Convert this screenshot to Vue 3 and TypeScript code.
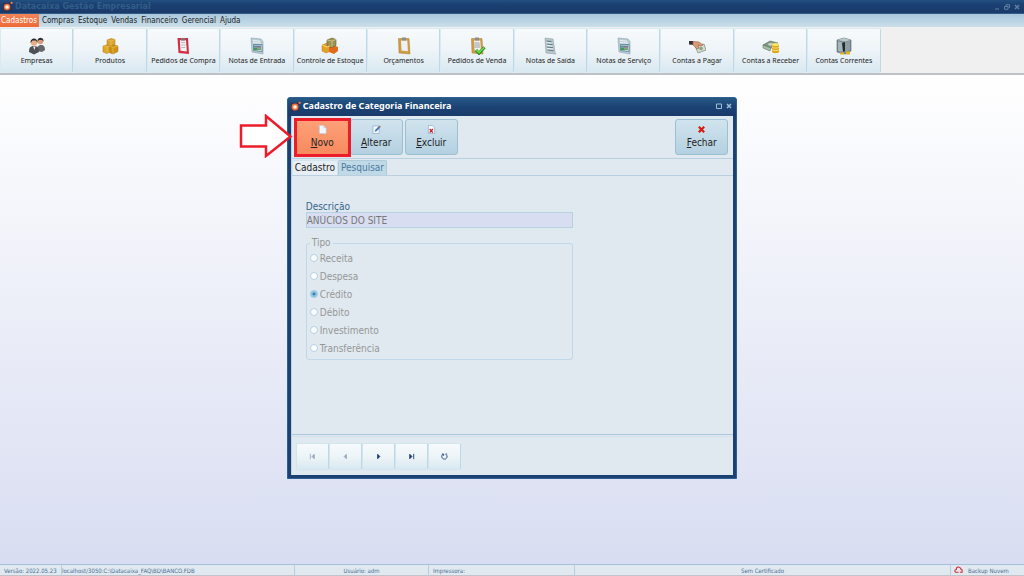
<script setup lang="ts">
import { ref } from 'vue'

interface Tool {
  label: string
  icon: string
}

const menus: string[] = ['Cadastros', 'Compras', 'Estoque', 'Vendas', 'Financeiro', 'Gerencial', 'Ajuda']

const tools: Tool[] = [
  { label: 'Empresas', icon: 'people' },
  { label: 'Produtos', icon: 'boxes' },
  { label: 'Pedidos de Compra', icon: 'redclip' },
  { label: 'Notas de Entrada', icon: 'invoice' },
  { label: 'Controle de Estoque', icon: 'stock' },
  { label: 'Orçamentos', icon: 'clip' },
  { label: 'Pedidos de Venda', icon: 'clipcheck' },
  { label: 'Notas de Saída', icon: 'sheet' },
  { label: 'Notas de Serviço', icon: 'invoice' },
  { label: 'Contas a Pagar', icon: 'pay' },
  { label: 'Contas a Receber', icon: 'money' },
  { label: 'Contas Correntes', icon: 'safe' },
]

const types: string[] = ['Receita', 'Despesa', 'Crédito', 'Débito', 'Investimento', 'Transferência']
const selected = ref('Crédito')
const description = ref('ANÚCIOS DO SITE')
</script>

<template>
  <div class="app">
    <header class="titlebar">
      <svg class="logo" viewBox="0 0 12 12" aria-hidden="true">
        <rect x="1" y="2" width="9" height="9" fill="#3a2f4c" />
        <circle cx="5.500" cy="6.500" r="3.500" fill="#e9743f" />
        <circle cx="5.500" cy="6.500" r="2" fill="#fff3e6" />
        <circle cx="10.500" cy="2" r="1.300" fill="#e9743f" />
      </svg>
      <h1>Datacaixa Gestão Empresarial</h1>
      <div class="winbuttons">
        <button type="button" aria-label="Minimizar"><svg viewBox="0 0 6 6"><path d="M1 5h4" /></svg></button>
        <button type="button" aria-label="Restaurar"><svg viewBox="0 0 6 6"><path d="M2 2V.7h3.500V3.500H4.500M.5 2.500h3.500v2.800H.5z" /></svg></button>
        <button type="button" aria-label="Fechar janela"><svg viewBox="0 0 6 6"><path d="M1 1l4 4M5 1L1 5" stroke-width="1.500" /></svg></button>
      </div>
    </header>

    <nav class="menubar">
      <button v-for="(m, i) in menus" :key="m" type="button" :class="{ active: i === 0 }">{{ m }}</button>
    </nav>

    <div class="toolbar">
      <div class="tools">
        <button v-for="t in tools" :key="t.label" type="button" class="tool">
          <svg viewBox="0 0 18 18" aria-hidden="true">
            <g v-if="t.icon === 'people'">
              <path d="M9 14c0-4 1-6 4-6s4 2 4 5l-3 2z" fill="#66676b" />
              <circle cx="12.500" cy="4.500" r="2.700" fill="#d99b74" />
              <path d="M9.500 4.500c-.5-5 6.500-5 6 0l-1.500-1.500h-3z" fill="#333" />
              <path d="M1 15c0-4 1-6 5-6s5 2 5 6l-5 2.500z" fill="#505156" />
              <path d="M5 9.500h2.500L6.500 13z" fill="#eee" />
              <circle cx="6" cy="5.500" r="3.200" fill="#e7ae86" />
              <path d="M2.500 6c-.5-6 7.500-6 7 0L8 3.500H4.500z" fill="#2a2727" />
            </g>
            <g v-else-if="t.icon === 'boxes'" stroke="#a87511" stroke-width=".5">
              <path d="M6 3l4-1.500 4 1v5l-4 1.500-4-1z" fill="#dca42a" />
              <path d="M2 9l4-1 3 1v6l-3 1.500L2 15z" fill="#dea823" />
              <path d="M9 9l4-1 4 1v5.500L12 17l-3-1z" fill="#cf9218" />
              <path d="M6 3l4 1 4-1.500M10 4v5M2 9l4 1 3-1M6 10v6M9 9l3 1.500 5-1.500M12 10.500V17" fill="none" stroke="#f3cd62" />
            </g>
            <g v-else-if="t.icon === 'redclip'">
              <path d="M3.500 1h10.500l1 16-10.500-1z" fill="#d42c42" />
              <path d="M5.800 3.200h6.200l.8 11.300-6.300-.8z" fill="#f4f4f6" />
              <path d="M7 1h4v2.500H7z" fill="#777" />
              <path d="M7 5.500h4M7 8h4.500M7.300 10.500h4" stroke="#aaa" stroke-width=".8" />
            </g>
            <g v-else-if="t.icon === 'invoice'">
              <path d="M3 1l10 1 2 2.500v12.500L4 15z" fill="#b9cbd3" stroke="#8fa3ad" stroke-width=".6" />
              <path d="M5 3.500l7 .7M5 5.500l8 .7" stroke="#eef6f8" />
              <path d="M5.500 7.500h8.500v7l-8.500-1z" fill="#e6eff1" stroke="#527b91" stroke-width=".8" />
              <path d="M6 8.500h7v2H6z" fill="#5d87a4" /><path d="M6 10.500h3v2.500H6z" fill="#3d9b57" /><path d="M9 10.500h4v1H9z" fill="#b34c4c" /><path d="M9 11.500h4V13H9z" fill="#58a76b" />
            </g>
            <g v-else-if="t.icon === 'stock'">
              <path d="M1 8l5-2 4 2v6l-5 2-4-2z" fill="#e3a32a" stroke="#b77812" stroke-width=".5" />
              <path d="M8 10l5-1.500 4 1.500v4l-4 3-5-2z" fill="#e06b1c" />
              <path d="M6 3l5-2 4 1.500v6l-4.500 2-4.500-2z" fill="#9b9355" stroke="#665f2c" stroke-width=".6" />
              <path d="M6 3l5 1 4-1.500M11 4v6" fill="none" stroke="#cfc98c" stroke-width=".8" />
              <path d="M1 8l5 2 3-1" fill="none" stroke="#fbd36f" />
            </g>
            <g v-else-if="t.icon === 'clip' || t.icon === 'clipcheck'">
              <path d="M3.500 1.500h10.500l1 15.500-11-1z" fill="#cf9c40" stroke="#a77b34" stroke-width=".5" />
              <path d="M6 3.500h6.300l.6 10.800-6.400-.8z" fill="#edf1f5" />
              <path d="M7 .5h4v3H7z" fill="#8c8d8a" />
              <g v-if="t.icon === 'clipcheck'">
                <path d="M6.500 6h5M6.500 8h5.500M6.500 10h5.500" stroke="#888" stroke-width=".8" />
                <path d="M8 13l3 3.300 5.500-6" fill="none" stroke="#2a8b20" stroke-width="3" />
                <path d="M8.300 13l2.700 2.700 5-5.200" fill="none" stroke="#6ee04b" stroke-width="1.600" />
              </g>
            </g>
            <g v-else-if="t.icon === 'sheet'">
              <path d="M4 1l8 1 2 13.500 1 1.500-10-1z" fill="#b9c7cc" stroke="#8e9ea6" stroke-width=".6" />
              <path d="M5.500 4l5 .6M6 7l5.500.6M6 10l6 .6M6.500 13l6 .6" stroke="#5f7c83" stroke-width="1.200" />
              <path d="M5.500 5.500l5 .6M6 8.500l5.500.6M6 11.500l6 .6" stroke="#eff7f8" />
            </g>
            <g v-else-if="t.icon === 'pay'">
              <path d="M7 9l9-2 2 6-8 3z" fill="#d5ddd1" stroke="#87937f" stroke-width=".8" />
              <circle cx="13" cy="11.500" r="1.800" fill="#8ea486" />
              <path d="M1 4h4l1 4-5-.5z" fill="#3a2f31" />
              <path d="M5 4.500l6 .5 4 3-2 1-3-1 1 3-2 1-4-4z" fill="#d99a78" stroke="#9e6041" stroke-width=".6" />
            </g>
            <g v-else-if="t.icon === 'money'">
              <path d="M1 8l7-4 8 2-7 5z" fill="#7f9880" stroke="#586e5a" stroke-width=".6" />
              <path d="M1 8v3l7 3 1-3z" fill="#a9bba9" stroke="#607561" stroke-width=".6" />
              <ellipse cx="8.500" cy="7.300" rx="2.500" ry="1.400" fill="#c6d4c3" />
              <path d="M10 7.500h7V15c-1 1.600-6 1.600-7 0z" fill="#dda718" />
              <ellipse cx="13.500" cy="7.500" rx="3.500" ry="1.500" fill="#fae46c" />
              <path d="M10 10c1 1.500 6 1.500 7 0M10 12.500c1 1.500 6 1.500 7 0" fill="none" stroke="#fff099" stroke-width=".8" />
            </g>
            <g v-else>
              <path d="M2 3l7-2 7 2v11l-6 3-8-2z" fill="#7c8b90" stroke="#566267" stroke-width=".6" />
              <path d="M2 3l7-2 7 2-6 1.500z" fill="#b9c6ca" />
              <path d="M3 4.500l6 1.500v9l-6-1z" fill="#a5b5ba" />
              <path d="M7 6l3-1v9l-2 1z" fill="#242a2d" />
              <path d="M10 5l5-1v9l-5 2z" fill="#8d9da2" />
              <path d="M5 15.500h4v2H5zM11 14.500h4v3h-4z" fill="#eab220" />
            </g>
          </svg>
          <span>{{ t.label }}</span>
        </button>
      </div>
    </div>

    <main class="desktop"></main>

    <footer class="statusbar">
      <span>Versão: 2022.05.23</span>
      <span class="path">localhost/3050:C:\Datacaixa_FAQ\BD\BANCO.FDB</span>
      <span class="center">Usuário: adm</span>
      <span>Impressora:</span>
      <span class="center">Sem Certificado</span>
      <span class="backup">
        <svg viewBox="0 0 10 8" aria-hidden="true"><path d="M5 7H2.500C.3 7 .5 4 2.500 4 2.500.5 7 .3 7.500 3.500c2 0 1.800 2 1 2.500M6.500 7h2.500V5" fill="none" stroke="#d82832" stroke-width="1.200" /></svg>
        Backup Nuvem
      </span>
    </footer>

    <div class="overlay">
      <section class="dialog" role="dialog" aria-labelledby="dialog-title">
        <header class="dialog-title">
          <svg class="logo" viewBox="0 0 12 12" aria-hidden="true">
            <rect x="1" y="2" width="9" height="9" fill="#3a2f4c" />
            <circle cx="5.500" cy="6.500" r="3.800" fill="#e9743f" />
            <circle cx="5.500" cy="6.500" r="2" fill="#fff3e6" />
            <circle cx="10.500" cy="2" r="1.300" fill="#e9743f" />
          </svg>
          <h2 id="dialog-title">Cadastro de Categoria Financeira</h2>
          <div class="winbuttons">
            <button type="button" aria-label="Maximizar"><svg viewBox="0 0 6 6"><path d="M.5 1h5v4.500h-5z" /></svg></button>
            <button type="button" aria-label="Fechar diálogo"><svg viewBox="0 0 6 6"><path d="M1 1l4 4M5 1L1 5" stroke-width="1.500" /></svg></button>
          </div>
        </header>

        <div class="dialog-body">
          <div class="actions">
            <div class="callout">
              <button type="button" class="action new">
                <svg viewBox="0 0 10 10" aria-hidden="true"><path d="M1.500.5h4.500l3 3v6H1.500z" fill="#f2f8ff" stroke="#b5cce8" stroke-width=".7" /><path d="M6 .5v3h3" fill="#c3d9f2" /></svg>
                <span><u>N</u>ovo</span>
              </button>
              <svg class="arrow" viewBox="0 0 54 44" aria-hidden="true"><path d="M2 11.500h25V2l24.500 20.500L27 42v-9.500H2z" fill="#fff" stroke="#ed1c2b" stroke-width="2.500" /></svg>
            </div>
            <button type="button" class="action">
              <svg viewBox="0 0 10 10" aria-hidden="true"><path d="M1 1h7v8.500H1z" fill="#f3f8ff" stroke="#8ba9d0" stroke-width=".8" /><path d="M3 7.500l.5-2L7.500 1.500 9 3 5 7z" fill="#4774b8" /><path d="M7.500 1.500L8.500.5 9.800 2 9 3z" fill="#c96c30" /></svg>
              <span><u>A</u>lterar</span>
            </button>
            <button type="button" class="action">
              <svg viewBox="0 0 10 10" aria-hidden="true"><path d="M1.500.5h4.500l2.500 2.500v6.500h-7z" fill="#f7faff" stroke="#8fa7c8" stroke-width=".8" /><path d="M3 4.500l3.500 4M6.500 4.500L3 8.500" stroke="#bd2525" stroke-width="1.500" /></svg>
              <span><u>E</u>xcluir</span>
            </button>
            <button type="button" class="action close">
              <svg viewBox="0 0 10 10" aria-hidden="true"><path d="M2 2l6 6M8 2L2 8" stroke="#d71a0a" stroke-width="2.400" /></svg>
              <span><u>F</u>echar</span>
            </button>
          </div>

          <div class="tabs" role="tablist">
            <button type="button" role="tab" aria-selected="true" class="current">Cadastro</button>
            <button type="button" role="tab" aria-selected="false">Pesquisar</button>
          </div>

          <form class="page" @submit.prevent>
            <label for="description">Descrição</label>
            <input id="description" v-model="description" type="text" disabled />
            <fieldset disabled>
              <legend>Tipo</legend>
              <label v-for="t in types" :key="t">
                <input v-model="selected" type="radio" name="type" :value="t" />
                <span>{{ t }}</span>
              </label>
            </fieldset>
          </form>

          <div class="records">
            <button type="button" disabled aria-label="Primeiro"><svg viewBox="0 0 8 8"><path d="M1.500 1v6M6 1.500v5L3.500 4z" /></svg></button>
            <button type="button" disabled aria-label="Anterior"><svg viewBox="0 0 8 8"><path d="M5 1.500v5L2.500 4z" /></svg></button>
            <button type="button" aria-label="Próximo"><svg viewBox="0 0 8 8"><path d="M3 1.500v5L5.500 4z" /></svg></button>
            <button type="button" aria-label="Último"><svg viewBox="0 0 8 8"><path d="M6.500 1v6M2 1.500v5L4.500 4z" /></svg></button>
            <button type="button" aria-label="Atualizar"><svg viewBox="0 0 8 8"><path d="M2 1.500C-.5 4 1.500 7 4 7s4-3 2-5M1 1.200h2v2M5 1.200h2" class="line" /></svg></button>
          </div>
        </div>
      </section>
    </div>
  </div>
</template>

<style>
body {
  margin: 0;
}
</style>

<style scoped>
.app {
  position: relative;
  display: flex;
  flex-direction: column;
  min-height: 100vh;
  font-family: "DejaVu Sans Condensed", "Noto Sans", sans-serif;
  font-size: 10px;
  color: #222;
}
.app * {
  box-sizing: border-box;
}
button,
input {
  font-family: inherit;
  font-size: inherit;
  color: inherit;
  margin: 0;
}
button {
  padding: 0;
  border: 0;
  background: none;
}
h1,
h2 {
  margin: 0;
  line-height: 12px;
  font-weight: bold;
}
.titlebar {
  display: flex;
  align-items: center;
  height: 14px;
  padding: 0 4px 0 2px;
  gap: 2px;
  background: linear-gradient(#215080, #1b4072 35%, #1a3a6b);
  border-bottom: 1px solid #315b85;
}
.titlebar h1 {
  font-family: "DejaVu Sans", sans-serif;
  font-size: 8px;
  color: #325e88;
}
.logo {
  width: 11px;
  height: 11px;
}
.winbuttons {
  display: flex;
  gap: 4px;
  margin-left: auto;
}
.winbuttons button {
  display: flex;
}
.winbuttons svg {
  width: 6px;
  height: 6px;
  fill: none;
  stroke: #5c80a2;
}
.menubar {
  display: flex;
  height: 13px;
  gap: 2px;
  background: linear-gradient(#a9c7dc, #cbdfea);
}
.menubar button {
  padding: 0 1px;
  font-size: 8px;
  line-height: 13px;
}
.menubar .active {
  padding-right: 2px;
  background: linear-gradient(#f58457, #ee6a38);
  color: #fff;
}
.toolbar {
  height: 48px;
  padding-top: 1px;
  background: #f0f0f0;
  border-bottom: 2px solid #bfc2c4;
}
.tools {
  display: grid;
  grid-template-columns: repeat(12, 1fr);
  width: 86%;
  height: 45px;
}
.tool {
  display: flex;
  flex-direction: column;
  align-items: center;
  padding-top: 8px;
  background: linear-gradient(#f7fafc, #eef4f8 50%, #d9e9f1);
  border: 1px solid #dbeaf2;
  border-right-color: #bcd9e7;
  border-radius: 2px;
  font-family: "Noto Sans", sans-serif;
  font-size: 7px;
  line-height: 12px;
  white-space: nowrap;
}
.tool svg {
  width: 18px;
  height: 18px;
}
.desktop {
  flex: 1;
  background: linear-gradient(#fff, #d8ddf1);
}
.statusbar {
  display: grid;
  grid-template-columns: 62fr 233fr 134fr 146fr 376fr 73fr;
  height: 12px;
  background: #e0e9f0;
  border-top: 1px solid #a5c1da;
  border-bottom: 1px solid #c0c4ca;
  font-size: 6px;
  line-height: 11px;
  color: #4a6f94;
  white-space: nowrap;
}
.statusbar span {
  padding-left: 4px;
  border-right: 1px solid #b6cddd;
}
.statusbar .path {
  padding-left: 0;
}
.statusbar .center {
  padding-left: 0;
  text-align: center;
}
.statusbar .backup {
  display: flex;
  gap: 5px;
  padding-left: 3px;
  border: 0;
}
.backup svg {
  width: 9px;
  height: 9px;
}
.overlay {
  position: absolute;
  inset: 0;
  display: flex;
  align-items: center;
  justify-content: center;
}
.dialog {
  width: 44%;
  padding: 0 3px 3px;
  background: #1b4172;
  border: 1px solid #2f608f;
  border-radius: 3px 3px 0 0;
}
.dialog-title {
  display: flex;
  align-items: center;
  height: 18px;
  gap: 2px;
  margin: 0 -3px;
  padding: 0 4px 2px 2px;
  color: #fff;
  background: linear-gradient(#255886, #1b4374 50%, #193a6a);
}
.dialog-title h2 {
  font-family: "Noto Sans", sans-serif;
  font-size: 9px;
}
.dialog-title .winbuttons svg {
  stroke: #9fbdd6;
}
.dialog-body {
  background: #e0e9f0;
  border-left: 1px solid #bdd3e2;
}
.actions {
  display: flex;
  gap: 2px;
  height: 43px;
  padding: 3px 5px 3px 2px;
  border-bottom: 1px solid #b9d0e0;
}
.callout {
  position: relative;
  display: flex;
  margin: -1px -3px -2px 0;
}
.action {
  display: flex;
  flex-direction: column;
  align-items: center;
  width: 53px;
  height: 36px;
  padding-top: 5px;
  gap: 1px;
  line-height: 15px;
  background: linear-gradient(#d1e4ee, #b4d0e1);
  border: 1px solid #9cc0d3;
  border-radius: 3px;
}
.action svg {
  width: 9px;
  height: 9px;
}
.action.new {
  width: 57px;
  height: 39px;
  padding-top: 4px;
  background: linear-gradient(#fda078, #f88a5f);
  border: 3px solid #ed1c2b;
  border-radius: 0;
}
.action.close {
  margin-left: auto;
}
.arrow {
  position: absolute;
  left: -55px;
  top: -4px;
  width: 54px;
  height: 44px;
}
.tabs {
  display: flex;
  align-items: flex-end;
  height: 16px;
}
.tabs button {
  height: 15px;
  padding: 0 2px;
  line-height: 14px;
  color: #4a7a9d;
  background: #c0d9e7;
  border: 1px solid #aecbdc;
  border-bottom: 0;
  border-radius: 2px 2px 0 0;
}
.tabs .current {
  color: #222;
  background: #e8eff4;
  border-color: #d4e3ec;
}
.page {
  display: flex;
  flex-direction: column;
  align-items: flex-start;
  height: 260px;
  padding: 25px 4px 0 14px;
  border-top: 1px solid #b9d0e0;
  border-bottom: 1px solid #aac7dc;
}
.page > label {
  line-height: 11px;
  color: #356488;
}
.page > input {
  width: 63%;
  height: 16px;
  padding: 0;
  color: #777;
  background: #d8ddf1;
  border: 1px solid #b7d1e3;
  border-radius: 0;
}
fieldset {
  display: flex;
  flex-direction: column;
  width: 63%;
  margin: 9px 0 0;
  min-width: 0;
  padding: 0 4px 2px 3px;
  border: 1px solid #bfd7e6;
  border-radius: 3px;
  color: #979797;
}
legend {
  padding: 0 2px;
  line-height: 12px;
}
fieldset label {
  display: flex;
  align-items: center;
  gap: 2px;
  height: 18px;
}
fieldset input {
  appearance: none;
  width: 8px;
  height: 8px;
  border: 1px solid #b1d1e5;
  border-radius: 50%;
  background: #fff;
}
fieldset input:checked {
  border-color: #98c7e2;
  background: radial-gradient(circle, #3c83b3 0 1px, #98c7e2 2px);
}
.records {
  display: flex;
  height: 39px;
  margin-top: 1px;
  padding: 6px 4px;
  border-top: 1px solid #d2e1eb;
}
.records button {
  display: flex;
  align-items: center;
  justify-content: center;
  width: 33px;
  height: 27px;
  background: linear-gradient(#f6fafc, #edf4f7 50%, #d9e9f1);
  border: 1px solid #d2e5ef;
  border-right-color: #bcd9e7;
  border-radius: 2px;
}
.records svg {
  width: 7px;
  height: 7px;
  fill: #183b6b;
  stroke: #183b6b;
}
.records path {
  stroke-width: 1;
}
.records button:disabled svg {
  opacity: 0.4;
}
.records .line {
  fill: none;
}
</style>
